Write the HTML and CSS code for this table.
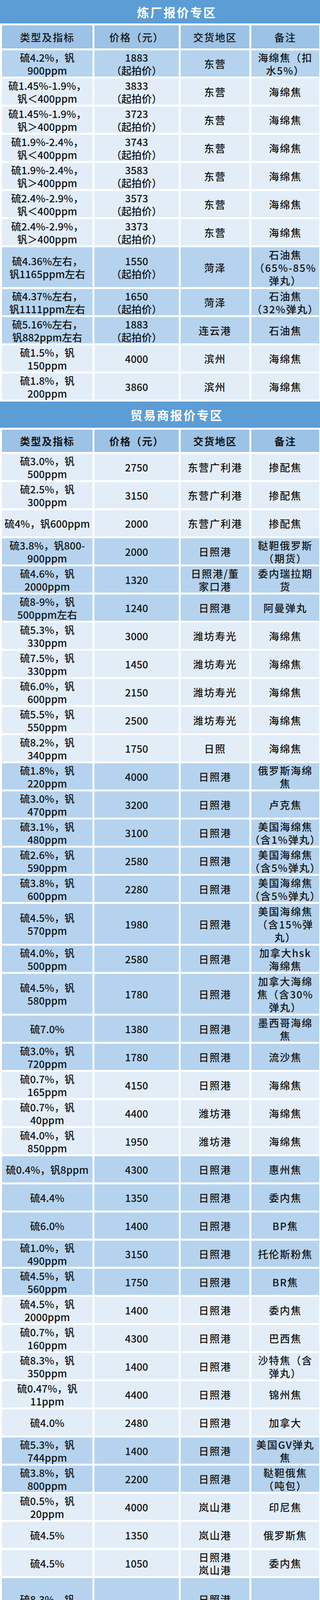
FILE: index.html
```html
<!DOCTYPE html>
<html lang="zh-CN">
<head>
<meta charset="utf-8">
<title>报价专区</title>
<link rel="stylesheet" href="styles.css">
</head>
<body>
<div class="sheet">
  <div class="title title-1">炼厂报价专区</div>
  <div class="grid">
    <div class="cell hd">类型及指标</div><div class="cell hd">价格（元）</div><div class="cell hd">交货地区</div><div class="cell hd">备注</div>

    <div class="cell dk">硫4.2%，钒<br>900ppm</div><div class="cell dk">1883<br>（起拍价）</div><div class="cell dk">东营</div><div class="cell dk">海绵焦（扣<br>水5%）</div>
    <div class="cell lt">硫1.45%-1.9%，<br>钒＜400ppm</div><div class="cell lt">3833<br>（起拍价）</div><div class="cell lt">东营</div><div class="cell lt">海绵焦</div>
    <div class="cell lt">硫1.45%-1.9%，<br>钒＞400ppm</div><div class="cell lt">3723<br>（起拍价）</div><div class="cell lt">东营</div><div class="cell lt">海绵焦</div>
    <div class="cell lt">硫1.9%-2.4%，<br>钒＜400ppm</div><div class="cell lt">3743<br>（起拍价）</div><div class="cell lt">东营</div><div class="cell lt">海绵焦</div>
    <div class="cell lt">硫1.9%-2.4%，<br>钒＞400ppm</div><div class="cell lt">3583<br>（起拍价）</div><div class="cell lt">东营</div><div class="cell lt">海绵焦</div>
    <div class="cell lt">硫2.4%-2.9%，<br>钒＜400ppm</div><div class="cell lt">3573<br>（起拍价）</div><div class="cell lt">东营</div><div class="cell lt">海绵焦</div>
    <div class="cell lt">硫2.4%-2.9%，<br>钒＞400ppm</div><div class="cell lt">3373<br>（起拍价）</div><div class="cell lt">东营</div><div class="cell lt">海绵焦</div>
    <div class="cell dk tall">硫4.36%左右，<br>钒1165ppm左右</div><div class="cell dk tall">1550<br>（起拍价）</div><div class="cell dk tall">菏泽</div><div class="cell dk tall">石油焦<br>（65%-85%<br>弹丸）</div>
    <div class="cell dk">硫4.37%左右，<br>钒1111ppm左右</div><div class="cell dk">1650<br>（起拍价）</div><div class="cell dk">菏泽</div><div class="cell dk">石油焦<br>（32%弹丸）</div>
    <div class="cell dk">硫5.16%左右，<br>钒882ppm左右</div><div class="cell dk">1883<br>（起拍价）</div><div class="cell dk">连云港</div><div class="cell dk">石油焦</div>
    <div class="cell lt">硫1.5%，钒<br>150ppm</div><div class="cell lt">4000</div><div class="cell lt">滨州</div><div class="cell lt">海绵焦</div>
    <div class="cell lt">硫1.8%，钒<br>200ppm</div><div class="cell lt">3860</div><div class="cell lt">滨州</div><div class="cell lt">海绵焦</div>
  </div>

  <div class="title title-2">贸易商报价专区</div>
  <div class="grid grid-last">
    <div class="cell hd hd-2">类型及指标</div><div class="cell hd hd-2">价格（元）</div><div class="cell hd hd-2">交货地区</div><div class="cell hd hd-2">备注</div>

    <div class="cell lt">硫3.0%，钒<br>500ppm</div><div class="cell lt">2750</div><div class="cell lt">东营广利港</div><div class="cell lt">掺配焦</div>
    <div class="cell lt">硫2.5%，钒<br>300ppm</div><div class="cell lt">3150</div><div class="cell lt">东营广利港</div><div class="cell lt">掺配焦</div>
    <div class="cell lt">硫4%，钒600ppm</div><div class="cell lt">2000</div><div class="cell lt">东营广利港</div><div class="cell lt">掺配焦</div>
    <div class="cell dk">硫3.8%，钒800-<br>900ppm</div><div class="cell dk">2000</div><div class="cell dk">日照港</div><div class="cell dk">鞑靼俄罗斯<br>（期货）</div>
    <div class="cell dk">硫4.6%，钒<br>2000ppm</div><div class="cell dk">1320</div><div class="cell dk">日照港/董<br>家口港</div><div class="cell dk">委内瑞拉期<br>货</div>
    <div class="cell dk">硫8-9%，钒<br>500ppm左右</div><div class="cell dk">1240</div><div class="cell dk">日照港</div><div class="cell dk">阿曼弹丸</div>
    <div class="cell lt">硫5.3%，钒<br>330ppm</div><div class="cell lt">3000</div><div class="cell lt">潍坊寿光</div><div class="cell lt">海绵焦</div>
    <div class="cell lt">硫7.5%，钒<br>330ppm</div><div class="cell lt">1450</div><div class="cell lt">潍坊寿光</div><div class="cell lt">海绵焦</div>
    <div class="cell lt">硫6.0%，钒<br>600ppm</div><div class="cell lt">2150</div><div class="cell lt">潍坊寿光</div><div class="cell lt">海绵焦</div>
    <div class="cell lt">硫5.5%，钒<br>550ppm</div><div class="cell lt">2500</div><div class="cell lt">潍坊寿光</div><div class="cell lt">海绵焦</div>
    <div class="cell lt">硫8.2%，钒<br>340ppm</div><div class="cell lt">1750</div><div class="cell lt">日照</div><div class="cell lt">海绵焦</div>
    <div class="cell dk">硫1.8%，钒<br>220ppm</div><div class="cell dk">4000</div><div class="cell dk">日照港</div><div class="cell dk">俄罗斯海绵<br>焦</div>
    <div class="cell dk">硫3.0%，钒<br>470ppm</div><div class="cell dk">3200</div><div class="cell dk">日照港</div><div class="cell dk">卢克焦</div>
    <div class="cell dk">硫3.1%，钒<br>480ppm</div><div class="cell dk">3100</div><div class="cell dk">日照港</div><div class="cell dk">美国海绵焦<br>（含1%弹丸）</div>
    <div class="cell dk">硫2.6%，钒<br>590ppm</div><div class="cell dk">2580</div><div class="cell dk">日照港</div><div class="cell dk">美国海绵焦<br>（含5%弹丸）</div>
    <div class="cell dk">硫3.8%，钒<br>600ppm</div><div class="cell dk">2280</div><div class="cell dk">日照港</div><div class="cell dk">美国海绵焦<br>（含5%弹丸）</div>
    <div class="cell dk tall">硫4.5%，钒<br>570ppm</div><div class="cell dk tall">1980</div><div class="cell dk tall">日照港</div><div class="cell dk tall">美国海绵焦<br>（含15%弹<br>丸）</div>
    <div class="cell dk">硫4.0%，钒<br>500ppm</div><div class="cell dk">2580</div><div class="cell dk">日照港</div><div class="cell dk">加拿大hsk<br>海绵焦</div>
    <div class="cell dk tall">硫4.5%，钒<br>580ppm</div><div class="cell dk tall">1780</div><div class="cell dk tall">日照港</div><div class="cell dk tall">加拿大海绵<br>焦（含30%<br>弹丸）</div>
    <div class="cell dk">硫7.0%</div><div class="cell dk">1380</div><div class="cell dk">日照港</div><div class="cell dk">墨西哥海绵<br>焦</div>
    <div class="cell dk">硫3.0%，钒<br>720ppm</div><div class="cell dk">1780</div><div class="cell dk">日照港</div><div class="cell dk">流沙焦</div>
    <div class="cell lt">硫0.7%，钒<br>165ppm</div><div class="cell lt">4150</div><div class="cell lt">日照港</div><div class="cell lt">海绵焦</div>
    <div class="cell lt">硫0.7%，钒<br>40ppm</div><div class="cell lt">4400</div><div class="cell lt">潍坊港</div><div class="cell lt">海绵焦</div>
    <div class="cell lt">硫4.0%，钒<br>850ppm</div><div class="cell lt">1950</div><div class="cell lt">潍坊港</div><div class="cell lt">海绵焦</div>
    <div class="cell dk">硫0.4%，钒8ppm</div><div class="cell dk">4300</div><div class="cell dk">日照港</div><div class="cell dk">惠州焦</div>
    <div class="cell dk">硫4.4%</div><div class="cell dk">1350</div><div class="cell dk">日照港</div><div class="cell dk">委内焦</div>
    <div class="cell dk">硫6.0%</div><div class="cell dk">1400</div><div class="cell dk">日照港</div><div class="cell dk">BP焦</div>
    <div class="cell dk">硫1.0%，钒<br>490ppm</div><div class="cell dk">3150</div><div class="cell dk">日照港</div><div class="cell dk">托伦斯粉焦</div>
    <div class="cell dk">硫4.5%，钒<br>560ppm</div><div class="cell dk">1750</div><div class="cell dk">日照港</div><div class="cell dk">BR焦</div>
    <div class="cell lt">硫4.5%，钒<br>2000ppm</div><div class="cell lt">1400</div><div class="cell lt">日照港</div><div class="cell lt">委内焦</div>
    <div class="cell lt">硫0.7%，钒<br>160ppm</div><div class="cell lt">4300</div><div class="cell lt">日照港</div><div class="cell lt">巴西焦</div>
    <div class="cell lt">硫8.3%，钒<br>350ppm</div><div class="cell lt">1400</div><div class="cell lt">日照港</div><div class="cell lt">沙特焦（含<br>弹丸）</div>
    <div class="cell lt">硫0.47%，钒<br>11ppm</div><div class="cell lt">4400</div><div class="cell lt">日照港</div><div class="cell lt">锦州焦</div>
    <div class="cell lt">硫4.0%</div><div class="cell lt">2480</div><div class="cell lt">日照港</div><div class="cell lt">加拿大</div>
    <div class="cell dk">硫5.3%，钒<br>744ppm</div><div class="cell dk">1400</div><div class="cell dk">日照港</div><div class="cell dk">美国GV弹丸<br>焦</div>
    <div class="cell dk">硫3.8%，钒<br>800ppm</div><div class="cell dk">2200</div><div class="cell dk">日照港</div><div class="cell dk">鞑靼俄焦<br>（吨包）</div>
    <div class="cell lt">硫0.5%，钒<br>20ppm</div><div class="cell lt">4000</div><div class="cell lt">岚山港</div><div class="cell lt">印尼焦</div>
    <div class="cell lt">硫4.5%</div><div class="cell lt">1350</div><div class="cell lt">岚山港</div><div class="cell lt">俄罗斯焦</div>
    <div class="cell lt">硫4.5%</div><div class="cell lt">1050</div><div class="cell lt">日照港<br>岚山港</div><div class="cell lt">委内焦</div>
    <div class="cell dk xtall">硫8.3%，钒<br>340ppm</div><div class="cell dk xtall">暂未报价</div><div class="cell dk xtall">日照港<br>潍坊港</div><div class="cell dk xtall">沙特焦</div>
    <div class="cell lt">硫1.8%，钒400ppm</div><div class="cell lt">暂未报价</div><div class="cell lt">日照港</div><div class="cell lt">海绵焦</div>
    <div class="cell lt">硫6.0%，钒450ppm</div><div class="cell lt">暂未报价</div><div class="cell lt">日照港</div><div class="cell lt">海绵焦</div>
    <div class="cell lt">硫2.5%，钒950ppm</div><div class="cell lt">暂未报价</div><div class="cell lt">日照港</div><div class="cell lt">弹丸焦</div>
    <div class="cell lt">硫2.8%，钒800ppm</div><div class="cell lt">暂未报价</div><div class="cell lt">日照港</div><div class="cell lt">弹丸焦</div>
    <div class="cell dk">硫8.0%，钒<br>400ppm</div><div class="cell dk">暂未报价</div><div class="cell dk">日照</div><div class="cell dk">海绵焦</div>
    <div class="cell lt">硫3.2%，钒<br>480ppm</div><div class="cell lt">暂未报价</div><div class="cell lt">日照港</div><div class="cell lt">海绵焦</div>
    <div class="cell dk stub"></div><div class="cell dk stub"></div><div class="cell dk stub"></div><div class="cell dk stub"></div>
  </div>
</div>
</body>
</html>
```

FILE: styles.css
```css
* {
  box-sizing: border-box;
  margin: 0;
  padding: 0;
}

html, body {
  background: #ffffff;
}

body {
  width: 820px;
  font-family: "Noto Sans CJK SC", "Noto Sans", sans-serif;
  color: #141414;
}

.sheet {
  display: flex;
  flex-direction: column;
}

.title {
  display: flex;
  align-items: center;
  justify-content: center;
  padding-left: 86px;
  background: #5c9dd5;
  color: #ffffff;
  font-size: 31px;
  font-weight: 700;
  letter-spacing: 3px;
}

.title-1 {
  height: 60px;
}

.title-2 {
  height: 67px;
}

.grid {
  display: grid;
  grid-template-columns: 232px 216px 176px 174px;
  gap: 5px;
  padding: 5px 0 5px 5px;
}

.grid-last {
  padding-bottom: 0;
}

.cell {
  height: 67px;
  display: flex;
  align-items: center;
  justify-content: center;
  text-align: center;
  white-space: nowrap;
  font-size: 26px;
  font-weight: 500;
  line-height: 33px;
}

/* third and fourth columns hold mostly CJK text: widen it a little */
.cell:nth-child(4n+3),
.cell:nth-child(4n+4),
.hd {
  letter-spacing: 2px;
}

.hd {
  height: 59px;
  background: #9cc2e5;
}

.hd-2 {
  height: 57px;
  font-weight: 700;
}

.dk {
  background: #b5d3ee;
}

.lt {
  background: #e2edf8;
}

.tall {
  height: 102px;
}

.xtall {
  height: 139px;
}

.stub {
  height: 6px;
}
```
